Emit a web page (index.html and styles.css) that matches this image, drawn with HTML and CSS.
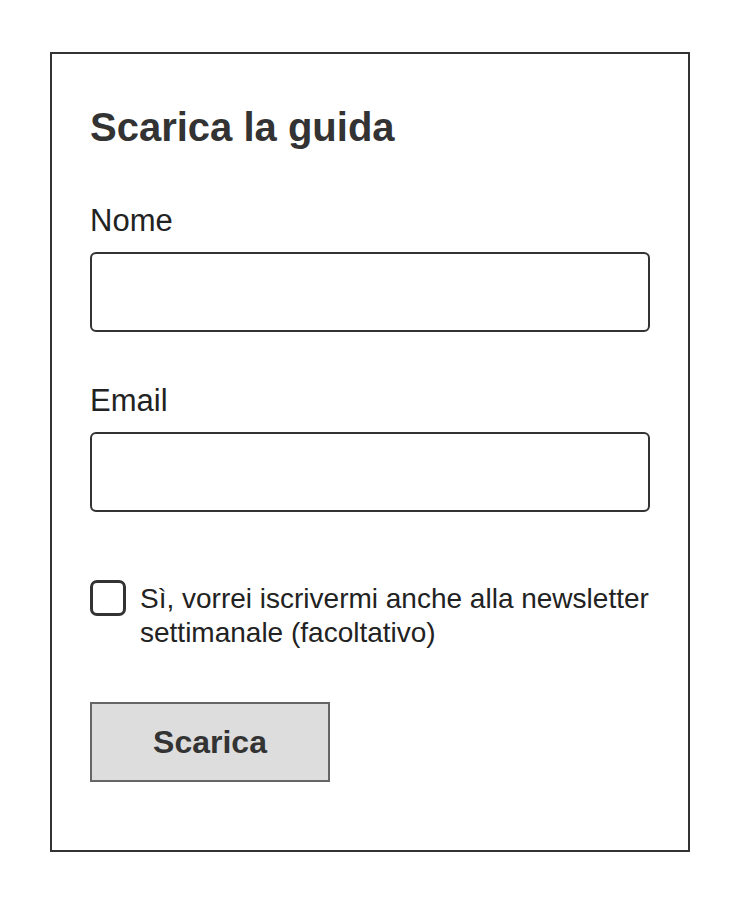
FILE: index.html
```html
<!DOCTYPE html>
<html lang="it">
<head>
<meta charset="utf-8">
<title>Scarica la guida</title>
<link rel="stylesheet" href="styles.css">
</head>
<body>
<form class="card">
  <h1 class="title">Scarica la guida</h1>
  <label class="label label-first" for="nome">Nome</label>
  <input class="field" id="nome" type="text">
  <label class="label" for="email">Email</label>
  <input class="field" id="email" type="email">
  <label class="consent">
    <input class="check" type="checkbox">
    <span class="consent-text">Sì, vorrei iscrivermi anche alla newsletter settimanale (facoltativo)</span>
  </label>
  <button class="submit" type="button">Scarica</button>
</form>
</body>
</html>
```

FILE: styles.css
```css
* { box-sizing: border-box; }
html, body { margin: 0; padding: 0; background: #fff; }
body {
  font-family: "Liberation Sans", Arial, Helvetica, sans-serif;
  color: #333;
}
.card {
  display: flex;
  flex-direction: column;
  align-items: flex-start;
  margin: 52px 0 0 50px;
  width: 640px;
  height: 800px;
  border: 2px solid #333;
  padding: 0 38px;
}
.title {
  margin: 49px 0 0;
  font-size: 40px;
  line-height: 48px;
  font-weight: bold;
  color: #333;
}
.label {
  display: block;
  margin-top: 50px;
  font-size: 31px;
  line-height: 38px;
  color: #222;
}
.label-first { margin-top: 51px; }
.field {
  display: block;
  margin: 12px 0 0;
  width: 560px;
  height: 80px;
  border: 2px solid #333;
  border-radius: 6px;
  background: #fff;
  font: inherit;
  padding: 0 14px;
}
.consent {
  display: flex;
  align-items: flex-start;
  gap: 14px;
  margin-top: 68px;
  width: 560px;
}
.check {
  appearance: none;
  -webkit-appearance: none;
  flex: none;
  width: 36px;
  height: 36px;
  margin: 0;
  border: 3px solid #333;
  border-radius: 7px;
  background: #fff;
}
.consent-text {
  margin-top: 2px;
  font-size: 28px;
  line-height: 34px;
  color: #222;
}
.submit {
  margin-top: 52px;
  width: 240px;
  height: 80px;
  border: 2px solid #666;
  border-radius: 0;
  background: #ddd;
  font-family: inherit;
  font-size: 32px;
  font-weight: bold;
  color: #333;
  padding: 0;
}
```
